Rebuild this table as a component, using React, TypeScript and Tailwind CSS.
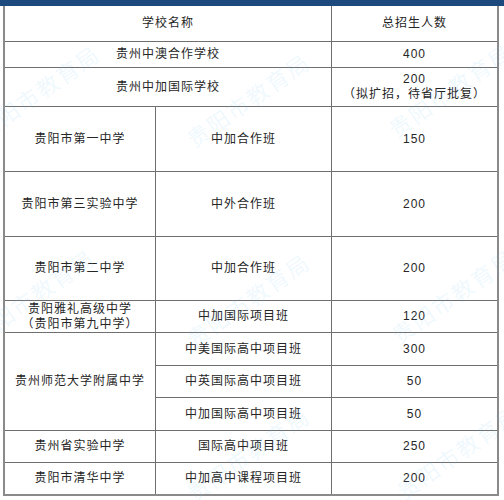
import React from "react";

const FONT = '"Liberation Sans", "Noto Sans CJK SC", sans-serif';

const WATERMARKS = [
  { left: -20, top: 118 },
  { left: 190, top: 126 },
  { left: 392, top: 116 },
  { left: -25, top: 322 },
  { left: 190, top: 326 },
  { left: 395, top: 322 },
  { left: 190, top: 480 },
  { left: 400, top: 478 },
];

function C({ children, className = "" }: { children: React.ReactNode; className?: string }) {
  return (
    <div className={"flex items-center justify-center bg-white text-center leading-[15px] " + className}>
      {children}
    </div>
  );
}

export default function App() {
  return (
    <div
      className="relative h-[500px] w-[504px] overflow-hidden bg-white text-[12px] tracking-[1px] text-[#262626]"
      style={{ fontFamily: FONT }}
    >
      <div className="h-[6px] w-full bg-[#1d4a7d]" />
      <div className="ml-[3px] w-[496px] border-x-2 border-b-2 border-[#8a8a8a]">
        <div className="grid grid-cols-[150px_175px_165px] grid-rows-[35px_25px_38px_64px_64px_63px_31px_32px_31px_32px_31px_31px] gap-px bg-[#6f6f6f]">
          <C className="col-span-2">学校名称</C>
          <C>总招生人数</C>

          <C className="col-span-2">贵州中澳合作学校</C>
          <C>400</C>

          <C className="col-span-2">贵州中加国际学校</C>
          <C className="flex-col">
            <span>200</span>
            <span>（拟扩招，待省厅批复）</span>
          </C>

          <C>贵阳市第一中学</C>
          <C>中加合作班</C>
          <C>150</C>

          <C>贵阳市第三实验中学</C>
          <C>中外合作班</C>
          <C>200</C>

          <C>贵阳市第二中学</C>
          <C>中加合作班</C>
          <C>200</C>

          <C className="flex-col">
            <span>贵阳雅礼高级中学</span>
            <span>（贵阳市第九中学）</span>
          </C>
          <C>中加国际项目班</C>
          <C>120</C>

          <C className="row-span-3">贵州师范大学附属中学</C>
          <C>中美国际高中项目班</C>
          <C>300</C>
          <C>中英国际高中项目班</C>
          <C>50</C>
          <C>中加国际高中项目班</C>
          <C>50</C>

          <C>贵州省实验中学</C>
          <C>国际高中项目班</C>
          <C>250</C>

          <C>贵阳市清华中学</C>
          <C>中加高中课程项目班</C>
          <C>200</C>
        </div>
      </div>

      {/* watermark */}
      <div className="pointer-events-none absolute inset-0" aria-hidden="true">
        {WATERMARKS.map((w, i) => (
          <span
            key={i}
            className="absolute origin-left -rotate-[35deg] whitespace-nowrap text-[22px] tracking-[2px] text-[#7cc8f0]/12"
            style={{ left: w.left, top: w.top }}
          >
            贵阳市教育局
          </span>
        ))}
      </div>
    </div>
  );
}
